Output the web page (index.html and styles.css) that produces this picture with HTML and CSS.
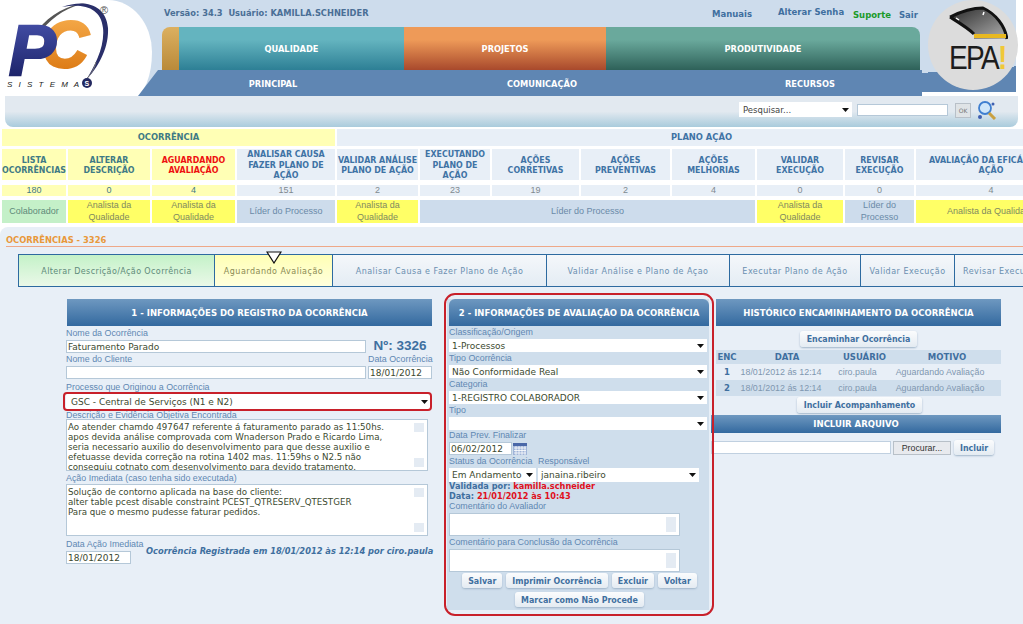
FILE: index.html
```html
<!doctype html>
<html lang="pt-BR">
<head>
<meta charset="utf-8">
<title>Ocorrências - 3326</title>
<link rel="stylesheet" href="styles.css">
</head>

<body>
<div class="top">
  <div class="logo">
    <svg width="118" height="96" viewBox="0 0 118 96">
      <defs>
        <linearGradient id="navy" x1="0" y1="0" x2="0" y2="1"><stop offset="0" stop-color="#4a55b0"/><stop offset="1" stop-color="#141a5c"/></linearGradient>
        <linearGradient id="orng" x1="0" y1="0" x2="0" y2="1"><stop offset="0" stop-color="#f8b050"/><stop offset="1" stop-color="#d8720c"/></linearGradient>
      </defs>
      <path d="M38 30C50 14 68 5 86 3C70 6 54 15 42 30Z" fill="#555"/>
      <path d="M62 7C84 -1 106 4 108 28C109 48 98 68 86 80C95 66 105 46 103 28C101 8 84 3 62 7Z" fill="#2a2f6a"/>
      <path d="M96 62C94 70 90 76 85 80" fill="none" stroke="#777" stroke-width="1"/>
      <text class="lg-c" x="42" y="67" fill="url(#orng)" stroke="url(#orng)">C</text>
      <text class="lg-p" x="9" y="75" fill="url(#navy)" stroke="url(#navy)">P</text>
      <text class="lg-r" x="100" y="14">®</text>
      <text class="lg-s" x="7" y="87">S I S T E M A</text>
      <circle cx="87" cy="83" r="5" fill="#23285f"/>
      <text class="lg-s2" x="84.500" y="86">S</text>
    </svg>
  </div>

  <div class="mid">
    <div class="meta">
      <span class="who">Versão: 34.3 &nbsp;Usuário: KAMILLA.SCHNEIDER</span>
      <a class="l-man">Manuais</a>
      <a class="l-sen">Alterar Senha</a>
      <a class="l-sup">Suporte</a>
      <a class="l-sair">Sair</a>
    </div>
    <div class="tabs">
      <div class="tab t-gold"></div>
      <div class="tab t-teal">QUALIDADE</div>
      <div class="tab t-orange">PROJETOS</div>
      <div class="tab t-green">PRODUTIVIDADE</div>
    </div>
    <div class="subnav">
      <span>PRINCIPAL</span>
      <span>COMUNICAÇÃO</span>
      <span>RECURSOS</span>
    </div>
  </div>

  <div class="epa">
    <div class="epa-c">
      <svg width="60" height="36" viewBox="0 0 60 36">
        <defs>
          <linearGradient id="gg" x1="0" y1="0" x2="1" y2="1"><stop offset="0" stop-color="#2a2a2a"/><stop offset="1" stop-color="#b0b0b0"/></linearGradient>
        </defs>
        <path d="M2 11C14 5 24 2 35 2C48 8 57 20 59 33L26 33L26 28C20 22 10 16 2 11Z" fill="url(#gg)"/>
        <path d="M2 11C14 5 24 2 35 2C48 8 57 20 59 33M2 11C10 16 20 22 26 28" fill="none" stroke="#111" stroke-width="3" stroke-linejoin="round"/>
        <rect x="26" y="28" width="32" height="4" fill="#e8b820"/>
        <path d="M8 12L11 14M36 6L35 9" stroke="#fff" stroke-width="1.500"/>
      </svg>
      <div class="epa-t">EPA<b>!</b></div>
    </div>
  </div>
</div>

<div class="searchbar">
  <select class="s-sel"><option>Pesquisar...</option></select>
  <input class="s-in" type="text">
  <button class="s-ok">OK</button>
  <svg class="s-ic" width="20" height="19" viewBox="0 0 20 19">
    <circle cx="8" cy="7" r="6" fill="#cfe6fa" stroke="#3f7fd0" stroke-width="1.800"/>
    <path d="M12 12L18 18" stroke="#c9a040" stroke-width="3"/>
    <circle cx="3" cy="16" r="2" fill="#3f5fb0"/>
    <circle cx="16" cy="3" r="1.500" fill="#3f5fb0"/>
  </svg>
</div>

<div class="stats">
  <div class="h-oc">OCORRÊNCIA</div>
  <div class="h-pl">PLANO AÇÃO</div>

  <div class="st y">LISTA<br>OCORRÊNCIAS</div>
  <div class="st y">ALTERAR<br>DESCRIÇÃO</div>
  <div class="st y red">AGUARDANDO<br>AVALIAÇÃO</div>
  <div class="st">ANALISAR CAUSA<br>FAZER PLANO DE<br>AÇÃO</div>
  <div class="st">VALIDAR ANÁLISE<br>PLANO DE AÇÃO</div>
  <div class="st">EXECUTANDO<br>PLANO DE<br>AÇÃO</div>
  <div class="st">AÇÕES<br>CORRETIVAS</div>
  <div class="st">AÇÕES<br>PREVENTIVAS</div>
  <div class="st">AÇÕES<br>MELHORIAS</div>
  <div class="st">VALIDAR<br>EXECUÇÃO</div>
  <div class="st">REVISAR<br>EXECUÇÃO</div>
  <div class="st">AVALIAÇÃO DA EFICÁCIA DA<br>AÇÃO</div>

  <div class="n y">180</div>
  <div class="n y">0</div>
  <div class="n y">4</div>
  <div class="n">151</div>
  <div class="n">2</div>
  <div class="n">23</div>
  <div class="n">19</div>
  <div class="n">2</div>
  <div class="n">4</div>
  <div class="n">0</div>
  <div class="n">0</div>
  <div class="n">4</div>

  <div class="r r-g">Colaborador</div>
  <div class="r r-y">Analista da Qualidade</div>
  <div class="r r-y">Analista da Qualidade</div>
  <div class="r r-b">Líder do Processo</div>
  <div class="r r-y">Analista da Qualidade</div>
  <div class="r r-b r-wide">Líder do Processo</div>
  <div class="r r-y">Analista da Qualidade</div>
  <div class="r r-b">Líder do Processo</div>
  <div class="r r-y">Analista da Qualidade</div>
</div>

<div class="panel">
  <div class="ptitle"><span>OCORRÊNCIAS - 3326</span></div>

  <div class="steps">
    <div class="step s1">Alterar Descrição/Ação Ocorrência</div>
    <div class="step s2">Aguardando Avaliação
      <svg class="marker" width="16" height="13" viewBox="0 0 16 13"><path d="M1 1H15L8 12Z" fill="#fff" stroke="#111" stroke-width="1.200"/></svg>
    </div>
    <div class="step s3">Analisar Causa e Fazer Plano de Ação</div>
    <div class="step s4">Validar Análise e Plano de Açao</div>
    <div class="step s5">Executar Plano de Ação</div>
    <div class="step s6">Validar Execução</div>
    <div class="step s7">Revisar Execução</div>
  </div>

  <div class="cols">
    <div class="col1">
      <div class="bar">1 - INFORMAÇÕES DO REGISTRO DA OCORRÊNCIA</div>
      <div class="form1">
        <label class="lb wide">Nome da Ocorrência</label>
        <input class="fld" type="text" value="Faturamento Parado">
        <div class="num">Nº: 3326</div>
        <label class="lb">Nome do Cliente</label>
        <label class="lb">Data Ocorrência</label>
        <input class="fld" type="text">
        <input class="fld" type="text" value="18/01/2012">
        <label class="lb wide low">Processo que Originou a Ocorrência</label>
        <div class="wide mark"><select class="sel"><option>GSC - Central de Serviços (N1 e N2)</option></select></div>
        <label class="lb wide">Descrição e Evidência Objetiva Encontrada</label>
        <textarea class="area wide">Ao atender chamdo 497647 referente á faturamento parado as 11:50hs.
apos devida análise comprovada com Wnaderson Prado e Ricardo Lima,
seria necessario auxilio do desenvolvimento para que desse auxilio e
efetuasse devida correção na rotina 1402 mas. 11:59hs o N2.5 não
conseguiu cotnato com desenvolvimento para devido tratamento.</textarea>
        <label class="lb wide">Ação Imediata (caso tenha sido executada)</label>
        <textarea class="area wide">Solução de contorno aplicada na base do cliente:
alter table pcest disable constraint PCEST_QTRESERV_QTESTGER
Para que o mesmo pudesse faturar pedidos.</textarea>
        <div class="wide foot">
          <div class="foot-l">
            <label class="lb">Data Ação Imediata</label>
            <input class="fld dt" type="text" value="18/01/2012">
          </div>
          <div class="reg">Ocorrência Registrada em 18/01/2012 às 12:14 por ciro.paula</div>
        </div>
      </div>
    </div>

    <div class="col2">
      <div class="bar">2 - INFORMAÇÕES DE AVALIAÇÃO DA OCORRÊNCIA</div>
      <div class="form2">
        <label class="lb">Classificação/Origem</label>
        <select class="sel"><option>1-Processos</option></select>
        <label class="lb">Tipo Ocorrência</label>
        <select class="sel"><option>Não Conformidade Real</option></select>
        <label class="lb">Categoria</label>
        <select class="sel"><option>1-REGISTRO COLABORADOR</option></select>
        <label class="lb">Tipo</label>
        <select class="sel tall"><option></option></select>
        <label class="lb short">Data Prev. Finalizar</label>
        <div class="dline">
          <input class="fld dt" type="text" value="06/02/2012">
          <svg width="14" height="12" viewBox="0 0 14 12">
            <rect width="14" height="12" fill="#9fb4d8"/>
            <rect width="14" height="3" fill="#4a68a8"/>
            <path d="M1 5H13M1 7.500H13M1 10H13M3 3V12M6 3V12M9 3V12M12 3V12" stroke="#fff" stroke-width=".8"/>
          </svg>
        </div>
        <div class="two lb"><label>Status da Ocorrência</label><label>Responsável</label></div>
        <div class="two">
          <select class="sel st1"><option>Em Andamento</option></select>
          <select class="sel st2"><option>janaina.ribeiro</option></select>
        </div>
        <div class="valid">Validada por: <b>kamilla.schneider</b><br>Data: <b>21/01/2012 às 10:43</b></div>
        <label class="lb short">Comentário do Avaliador</label>
        <textarea class="area small"></textarea>
        <label class="lb">Comentário para Conclusão da Ocorrência</label>
        <textarea class="area small"></textarea>
        <div class="btns">
          <button class="btn">Salvar</button>
          <button class="btn">Imprimir Ocorrência</button>
          <button class="btn">Excluir</button>
          <button class="btn">Voltar</button>
        </div>
        <div class="btns b2">
          <button class="btn">Marcar como Não Procede</button>
        </div>
      </div>
    </div>

    <div class="col3">
      <div class="bar b3">HISTÓRICO ENCAMINHAMENTO DA OCORRÊNCIA</div>
      <div class="c-btn"><button class="btn">Encaminhar Ocorrência</button></div>
      <table class="hist">
        <tr><th class="w1">ENC</th><th class="w2">DATA</th><th class="w3">USUÁRIO</th><th class="w4">MOTIVO</th></tr>
        <tr><td class="e">1</td><td class="d">18/01/2012 ás 12:14</td><td class="u">ciro.paula</td><td class="m">Aguardando Avaliação</td></tr>
        <tr class="alt"><td class="e">2</td><td class="d">18/01/2012 ás 12:14</td><td class="u">ciro.paula</td><td class="m">Aguardando Avaliação</td></tr>
      </table>
      <div class="c-btn c2"><button class="btn">Incluir Acompanhamento</button></div>
      <div class="bar thin">INCLUIR ARQUIVO</div>
      <div class="upload">
        <input class="u-in" type="text">
        <button class="u-pr">Procurar...</button>
        <button class="btn">Incluir</button>
      </div>
    </div>
  </div>
</div>
</body>
</html>
```

FILE: styles.css
```css
html, body {
  margin: 0;
  padding: 0;
  width: 1023px;
  height: 624px;
  overflow: hidden;
  background: #fff;
  font-family: "Liberation Sans", Arial, sans-serif;
}

/* header */
.top {
  display: flex;
  height: 96px;
  background: linear-gradient(to right, #cddcec 1016px, #fff 1016px) top / 100% 92px no-repeat, #fff;
}
.logo {
  width: 152px;
  height: 96px;
  flex: none;
  background: #fff;
  border-radius: 0 44px 18px 0 / 0 52px 44px 0;
  margin-right: 6px;
}
.logo svg {
  display: block;
}
.lg-p {
  font: italic bold 70px "Liberation Sans", sans-serif;
  stroke-width: 2.500px;
}
.lg-c {
  font: italic bold 64px "Liberation Sans", sans-serif;
  stroke-width: 3px;
}
.lg-r {
  font: 11px "Liberation Sans", sans-serif;
  fill: #555;
}
.lg-s {
  font: italic 8px "Liberation Sans", sans-serif;
  fill: #222;
  letter-spacing: 2px;
}
.lg-s2 {
  font: bold 7px "Liberation Sans", sans-serif;
  fill: #fff;
}

.mid {
  width: 764px;
  flex: none;
}
.meta {
  height: 27px;
  display: flex;
  font: bold 8.300px "DejaVu Sans", sans-serif;
  color: #4f7299;
  position: relative;
}
.who {
  margin: 8px 0 0 6px;
  color: #4a6f96;
  width: 548px;
}
.meta a {
  font-size: 8.500px;
  color: #3f6f9f;
}
.l-man { margin-top: 9px; width: 66px; }
.l-sen { margin-top: 7px; width: 75px; }
.l-sup { margin-top: 10px; width: 46px; color: #1a9a2a !important; }
.l-sair { margin-top: 10px; }

.tabs {
  height: 43px;
  margin-left: 4px;
  display: flex;
  width: 758px;
}
.tab {
  display: flex;
  align-items: center;
  justify-content: center;
  font: bold 9.200px "DejaVu Sans Condensed", "DejaVu Sans", sans-serif;
  color: #fff;
}
.t-gold {
  width: 17px;
  border-radius: 8px 0 0 0;
  background: linear-gradient(#dcb060, #b98a3a);
}
.t-teal {
  width: 225px;
  background: linear-gradient(#64b4bf 30%, #2d7f95);
}
.t-orange {
  width: 202px;
  background: linear-gradient(#ee9a58 30%, #a8492c);
}
.t-green {
  width: 314px;
  border-radius: 0 8px 0 0;
  background: linear-gradient(#6aa99c 30%, #2e6159);
}
.subnav {
  height: 26px;
  margin-left: -20px;
  padding-left: 21px;
  display: grid;
  grid-template-columns: 228px 310px 226px;
  align-items: center;
  justify-items: center;
  background: #5f86b3;
  clip-path: polygon(20px 0, 100% 0, 100% 100%, 0 100%);
  font: bold 9.200px "DejaVu Sans Condensed", "DejaVu Sans", sans-serif;
  color: #fff;
}

.epa {
  width: 94px;
  flex: none;
  height: 92px;
  background: linear-gradient(176deg, #cddcec 0 74%, #5f86b3 74%);
}
.epa-c {
  width: 90px;
  height: 90px;
  margin-left: 6px;
  border-radius: 50%;
  background: #dcdcdc;
  display: flex;
  flex-direction: column;
  align-items: center;
  padding-top: 6px;
  box-sizing: border-box;
}
.epa-c svg {
  display: block;
  margin-left: 10px;
  flex: none;
}
.epa-t {
  font: 33px/26px "Liberation Sans", sans-serif;
  letter-spacing: -2px;
  color: #1c1c1c;
  margin: 3px 0 0 9px;
  white-space: nowrap;
  transform: scaleX(.85);
}
.epa-t b {
  color: #f0c838;
}

/* search */
.searchbar {
  margin: 0 5px;
  height: 31px;
  box-sizing: border-box;
  display: flex;
  align-items: flex-start;
  padding: 6px 21px 0 0;
  justify-content: flex-end;
  background: linear-gradient(#e2e9f0 50%, #a9cbdc);
  border-radius: 0 0 8px 8px;
}
.s-sel {
  width: 113px;
  height: 15px;
  margin: 0;
  padding: 0 0 0 4px;
  border: 0;
  appearance: none;
  font: 8.500px "DejaVu Sans", sans-serif;
  color: #444;
  background: #fff url('data:image/svg+xml;utf8,<svg xmlns="http://www.w3.org/2000/svg" width="7" height="4"><path d="M0 0H7L3.500 4Z" fill="%23111"/></svg>') no-repeat right 3px center;
}
.s-in {
  width: 91px;
  height: 12px;
  box-sizing: border-box;
  margin: 2px 7px 0 5px;
  padding: 0;
  border: 1px solid #b5c8d8;
  background: #fff;
}
.s-ok {
  width: 16px;
  height: 15px;
  margin: 1px 6px 0 0;
  padding: 0;
  border: 1px solid #b8c0c8;
  background: #dfe3e6;
  font: 6px "DejaVu Sans", sans-serif;
  color: #777;
}
.s-ic {
  margin-top: -1px;
}

/* stats table */
.stats {
  width: 1300px;
  margin: 2px 0 0 2px;
  display: grid;
  grid-template-columns: 64px 82px 83px 98px 81px 70px 87px 89px 83px 86px 69px 150px;
  grid-template-rows: 17px 31px 13px 24px;
  column-gap: 2px;
  row-gap: 3px;
  font: bold 8.800px/10.500px "DejaVu Sans Condensed", "DejaVu Sans", sans-serif;
  color: #3f73a5;
}
.h-oc, .h-pl {
  display: flex;
  align-items: center;
  justify-content: center;
  font-size: 9.300px;
  color: #3f7a85;
  background: #ffffb5;
}
.h-oc { grid-column: 1 / 5; }
.h-pl {
  grid-column: 5 / 13;
  background: #e8eff7;
  color: #3f73a5;
}
.st, .n, .r {
  display: flex;
  align-items: center;
  justify-content: center;
  text-align: center;
  background: #e8eff7;
}
.st { padding-top: 1px; box-sizing: border-box; }
.st.y, .n.y {
  background: #ffffb5;
  color: #3f7a85;
}
.st.red {
  color: #ee1010;
}
.n, .r {
  font: 9px/11.500px "Liberation Sans", sans-serif;
  color: #808a90;
}
.n { margin-top: 2px; }
.r { margin-top: 1px; color: #6a8aa8; }
.r-g { background: #c4f0c8; color: #5f8a7a; }
.r-y { background: #ffff66; color: #7f8a60; padding: 0 1px; }
.r-b { background: #cddcec; }
.r-wide { grid-column: 6 / 10; }

/* lower panel */
.panel {
  margin-top: 4px;
  height: 397px;
  overflow: hidden;
  background: #e8eff7;
  border-radius: 8px 0 0 0;
}
.ptitle {
  margin-left: 6px;
  height: 19px;
  border-bottom: 1px solid #eea888;
  font: bold 9.300px "DejaVu Sans Condensed", "DejaVu Sans", sans-serif;
  color: #e8983a;
  display: flex;
  align-items: flex-end;
  line-height: 12px;
}
.steps {
  display: flex;
  width: 1100px;
  height: 33px;
  margin: 7px 0 0 18px;
  border: solid #2d6aa0;
  border-width: 1px 0;
  box-sizing: border-box;
  background: linear-gradient(#f4f7fa, #e4ecf4);
}
.step {
  position: relative;
  display: flex;
  align-items: center;
  justify-content: center;
  flex: none;
  box-sizing: border-box;
  padding-top: 2px;
  border-left: 1px solid #2d6aa0;
  font: 8px "DejaVu Sans", sans-serif;
  color: #6a8fb0;
  letter-spacing: .5px;
}
.s1 { width: 196px; background: linear-gradient(#c4f2c8, #eaf8e8); color: #5f8a7a; letter-spacing: .4px; }
.s2 { width: 118px; background: linear-gradient(#ffffb5, #ffffdd); color: #8a8a55; }
.s3 { width: 214px; }
.s4 { width: 183px; }
.s5 { width: 131px; }
.s6 { width: 94px; }
.s7 { width: 150px; justify-content: flex-start; padding-left: 8px; }
.marker {
  position: absolute;
  left: 51px;
  top: -4px;
}

.cols {
  display: flex;
  margin-top: 12px;
  align-items: flex-start;
}
.bar {
  height: 27px;
  display: flex;
  align-items: center;
  justify-content: center;
  background: linear-gradient(#6e98c0, #33699f);
  font: bold 8.500px "DejaVu Sans", sans-serif;
  color: #fff;
}
.lb {
  font: 8.900px/11px "Liberation Sans", sans-serif;
  color: #5f88b3;
  display: block;
  white-space: nowrap;
}
.fld, .sel, .area {
  display: block;
  box-sizing: border-box;
  margin: 0;
  font: 9px "DejaVu Sans", sans-serif;
  color: #3c4a2f;
  background: #fff;
  border: 1px solid #b5c8d8;
}
.fld {
  height: 13px;
  padding: 0 0 0 1px;
}
.sel {
  width: 100%;
  height: 13px;
  border: 0;
  padding: 0 0 0 3px;
  appearance: none;
  background: #fff url('data:image/svg+xml;utf8,<svg xmlns="http://www.w3.org/2000/svg" width="7" height="4"><path d="M0 0H7L3.500 4Z" fill="%23111"/></svg>') no-repeat right 3px center;
}
.area {
  resize: none;
  overflow: hidden;
  padding: 2px 1px;
  font-size: 8.700px;
  line-height: 10px;
  white-space: pre;
  background:
    linear-gradient(#e4ebf3, #e4ebf3) right 3px top 3px / 10px 9px no-repeat,
    linear-gradient(#e4ebf3, #e4ebf3) right 3px bottom 3px / 10px 9px no-repeat,
    #fff;
}

.col1 {
  width: 366px;
  margin-left: 66px;
  flex: none;
}
.col1 .bar { margin-left: 1px; }
.form1 {
  display: grid;
  grid-template-columns: 300px 64px;
  column-gap: 2px;
  grid-template-rows: 14px 13px 13px 13px 15px 15px 10px 53px 12px 53px 26px;
}
.form1 .lb:nth-child(1) { padding-top: 1px; }
.form1 .lb { line-height: 12px; }
.form1 .low { padding-top: 2px; }
.wide { grid-column: 1 / 3; }
.num {
  font: bold 13.500px/12px "Liberation Sans", sans-serif;
  color: #3e70a0;
  text-align: center;
}
.mark {
  position: relative;
}
.mark .sel { height: 15px; width: 365px; padding-left: 5px; }
.mark::after {
  content: "";
  position: absolute;
  left: -3px;
  right: 0;
  top: -2px;
  bottom: -2px;
  border: 2px solid #c8202a;
  border-radius: 4px;
}
.form1 .area { width: 362px; height: 52px; }
.foot {
  display: flex;
}
.foot-l {
  width: 80px;
  flex: none;
}
.foot .lb { height: 13px; }
.dt { width: 65px; }
.reg {
  font: italic bold 8.300px "DejaVu Sans", sans-serif;
  color: #3f6f9f;
  margin-top: 9px;
  white-space: nowrap;
}

.col2 {
  position: relative;
  width: 262px;
  margin-left: 15px;
  flex: none;
  background: #cfdeec;
}
.col2 .bar { margin-left: 2px; border-radius: 6px 6px 0 0; }
.col2::after {
  content: "";
  position: absolute;
  left: -3px;
  right: -5px;
  top: -6px;
  bottom: -6px;
  border: 2px solid #c8202a;
  border-radius: 11px;
  pointer-events: none;
}
.form2 {
  padding: 0 2px 3px;
}
.form2 .lb { height: 13px; line-height: 12px; }
.form2 .lb.short { height: 12px; line-height: 11px; }
.form2 .sel { width: 258px; }
.dline {
  display: flex;
  gap: 1px;
  height: 13px;
  align-items: center;
}
.dline .dt { width: 63px; }
.two {
  display: flex;
  gap: 2px;
}
.two label { width: 87px; }
.form2 .two .st1 { width: 87px; }
.form2 .two .st2 { width: 161px; }
.form2 .two .sel { height: 14px; }
.valid {
  font: bold 8.200px/9.500px "DejaVu Sans", sans-serif;
  color: #3f6f9f;
  height: 19px;
}
.valid b { color: #e01020; }
.area.small {
  width: 231px;
  height: 23px;
}
.btns {
  display: flex;
  justify-content: center;
  gap: 4px;
  margin-top: 1px;
  padding-left: 3px;
}
.btns.b2 { margin-top: 4px; }
.btn {
  height: 15px;
  padding: 0 6px;
  border: 0;
  border-radius: 3px;
  background: linear-gradient(#fbfcfd, #e4ebf2);
  box-shadow: 0 1px 2px #9fb4c8;
  font: bold 8.800px "DejaVu Sans Condensed", "DejaVu Sans", sans-serif;
  color: #3f6f9f;
}

.col3 {
  width: 290px;
  margin-left: 2px;
  flex: none;
}
.b3 { margin-left: 5px; }
.c-btn {
  height: 24px;
  display: flex;
  justify-content: center;
  align-items: center;
  padding-left: 5px;
  padding-top: 1px;
  box-sizing: border-box;
}
.c-btn .btn { height: 16px; padding: 0 7px; }
.c2 { height: 18px; padding-left: 7px; padding-top: 0; }
.hist {
  margin-left: 5px;
  width: 285px;
  table-layout: fixed;
  border-collapse: collapse;
  font: 8.900px "Liberation Sans", sans-serif;
  color: #7f97b0;
}
.hist th {
  height: 14px;
  padding: 0;
  background: #cfdeec;
  font: bold 8.500px "DejaVu Sans", sans-serif;
  color: #3f6f9f;
}
.hist td {
  height: 16px;
  padding: 0;
  text-align: center;
  white-space: nowrap;
}
.hist .e {
  font: bold 8.500px "DejaVu Sans", sans-serif;
  color: #3f6f9f;
}
.hist .d { padding-right: 12px; }
.hist .u { padding-right: 14px; }
.hist .m { padding-right: 14px; }
.alt td { background: #cfdeec; }
.w1 { width: 22px; }
.w2 { width: 98px; }
.w3 { width: 57px; }
.w4 { width: 108px; }
.bar.thin {
  height: 18px;
  margin-top: 1px;
}
.upload {
  display: flex;
  margin-top: 7px;
  align-items: center;
}
.u-in {
  width: 180px;
  height: 13px;
  box-sizing: border-box;
  padding: 0;
  margin: 0 2px 0 0;
  border: 1px solid #c0d0e0;
  background: #fff;
}
.u-pr {
  width: 58px;
  height: 14px;
  padding: 0;
  margin-right: 3px;
  border: 1px solid #b8c0c8;
  background: #e8eaee;
  font: 8.800px "Liberation Sans", sans-serif;
  color: #333;
}
```
